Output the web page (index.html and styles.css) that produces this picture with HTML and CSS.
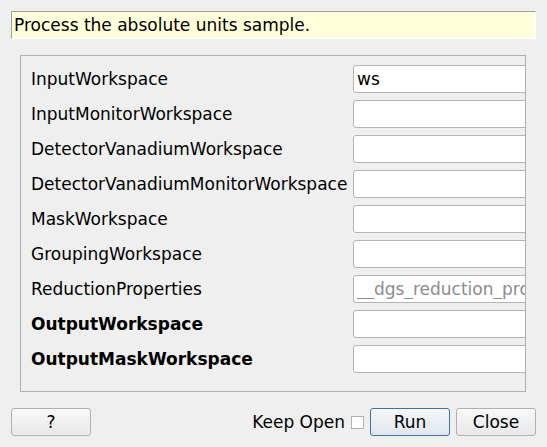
FILE: index.html
```html
<!DOCTYPE html>
<html>
<head>
<meta charset="utf-8">
<link rel="stylesheet" href="styles.css">
</head>
<body>
<div class="dialog">
  <div class="description">Process the absolute units sample.</div>
  <div class="frame">
    <div class="rows">
      <div class="row"><span class="label">InputWorkspace</span><input class="field" type="text" value="ws"></div>
      <div class="row"><span class="label">InputMonitorWorkspace</span><input class="field" type="text"></div>
      <div class="row"><span class="label">DetectorVanadiumWorkspace</span><input class="field" type="text"></div>
      <div class="row"><span class="label">DetectorVanadiumMonitorWorkspace</span><input class="field" type="text"></div>
      <div class="row"><span class="label">MaskWorkspace</span><input class="field" type="text"></div>
      <div class="row"><span class="label">GroupingWorkspace</span><input class="field" type="text"></div>
      <div class="row"><span class="label">ReductionProperties</span><input class="field" type="text" placeholder="__dgs_reduction_properties"></div>
      <div class="row"><span class="label bold">OutputWorkspace</span><input class="field" type="text"></div>
      <div class="row"><span class="label bold">OutputMaskWorkspace</span><input class="field" type="text"></div>
    </div>
  </div>
  <div class="buttons">
    <button class="btn">?</button>
    <div class="spacer"></div>
    <label class="keep">Keep Open <span class="check"></span></label>
    <button class="btn primary">Run</button>
    <button class="btn">Close</button>
  </div>
</div>
</body>
</html>
```
FILE: styles.css
```css
html, body {
  margin: 0;
  padding: 0;
  background: #efefef;
  font-family: "DejaVu Sans", "Liberation Sans", sans-serif;
  font-size: 17px;
  color: #000;
}
.dialog {
  width: 547px;
  height: 447px;
  padding: 11px;
  box-sizing: border-box;
  display: flex;
  flex-direction: column;
}
.description {
  height: 28px;
  box-sizing: border-box;
  background: #ffffdc;
  border-top: 1px solid #a0a0a0;
  border-left: 1px solid #a0a0a0;
  border-bottom: 1px solid #ffffff;
  border-right: 1px solid #ffffff;
  padding-left: 2px;
  line-height: 26px;
}
.frame {
  margin: 16px 10px 0 9px;
  height: 337px;
  box-sizing: border-box;
  border: 1px solid #b0b0b0;
  overflow: hidden;
}
.rows {
  padding: 9px 0 0 10px;
  display: flex;
  flex-direction: column;
  gap: 7px;
}
.row {
  display: flex;
  align-items: center;
  height: 28px;
}
.label {
  width: 322px;
  flex: none;
  white-space: nowrap;
}
.bold {
  font-weight: bold;
}
.field {
  flex: none;
  width: 200px;
  height: 28px;
  box-sizing: border-box;
  border: 1px solid #b4b4b4;
  border-radius: 3px;
  background: #ffffff;
  padding: 0 3px;
  font-family: "DejaVu Sans", sans-serif;
  font-size: 17px;
  color: #000;
  outline: none;
}
.field::placeholder {
  color: #8c8c8c;
}
.buttons {
  margin-top: 16px;
  display: flex;
  align-items: center;
  height: 28px;
}
.spacer {
  flex: 1;
}
.btn {
  width: 80px;
  height: 28px;
  box-sizing: border-box;
  border: 1px solid #b0b0b0;
  border-radius: 3px;
  background: linear-gradient(#f8f8f8, #e9e9e9);
  font-family: "DejaVu Sans", sans-serif;
  font-size: 17px;
  color: #000;
  padding: 0;
  margin-left: 6px;
}
.btn:first-child {
  margin-left: 0;
}
.primary {
  border-color: #3f73a6;
  background: linear-gradient(#f6f8fa, #dfe6ed);
}
.keep {
  display: flex;
  align-items: center;
  gap: 6px;
}
.check {
  width: 13px;
  height: 13px;
  box-sizing: border-box;
  border: 1px solid #b0b0b0;
  background: #ffffff;
  display: inline-block;
}
```
